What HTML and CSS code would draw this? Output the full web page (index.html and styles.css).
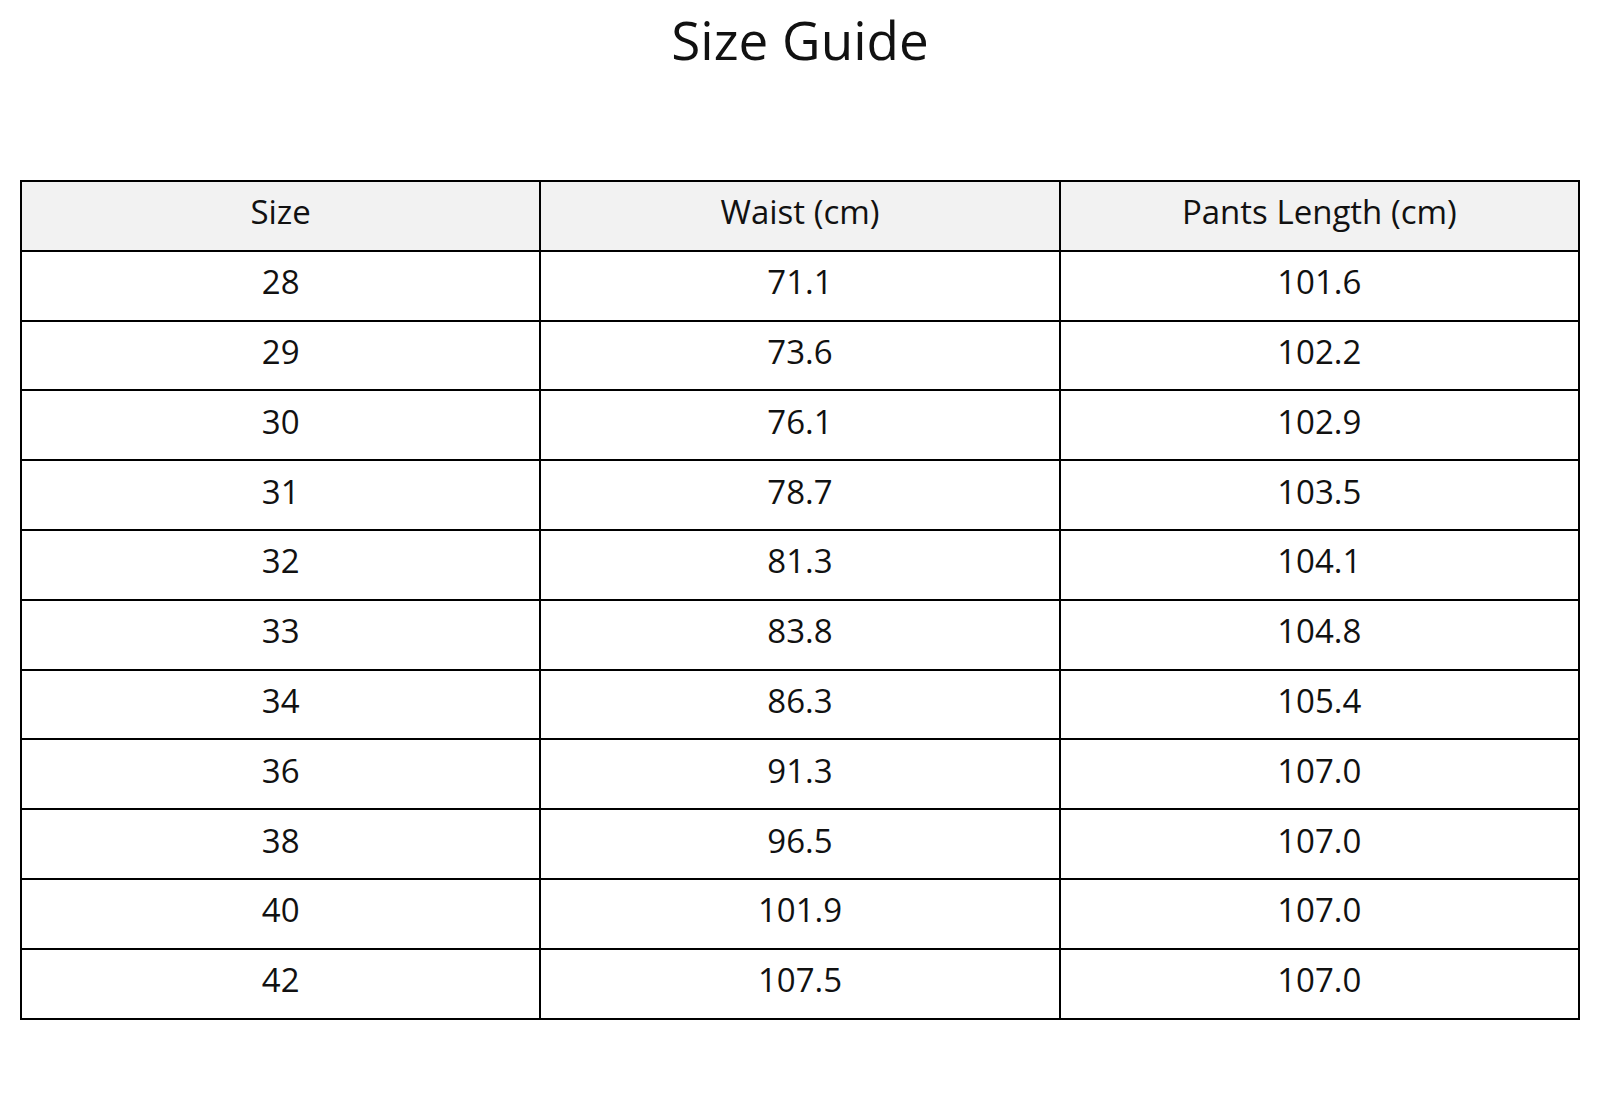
FILE: index.html
```html
<!DOCTYPE html>
<html>
<head>
<meta charset="utf-8">
<link rel="stylesheet" href="styles.css">
</head>
<body>
<h1 class="title">Size Guide</h1>
<table class="guide">
<thead>
<tr><th>Size</th><th>Waist (cm)</th><th>Pants Length (cm)</th></tr>
</thead>
<tbody>
<tr><td>28</td><td>71.1</td><td>101.6</td></tr>
<tr><td>29</td><td>73.6</td><td>102.2</td></tr>
<tr><td>30</td><td>76.1</td><td>102.9</td></tr>
<tr><td>31</td><td>78.7</td><td>103.5</td></tr>
<tr><td>32</td><td>81.3</td><td>104.1</td></tr>
<tr><td>33</td><td>83.8</td><td>104.8</td></tr>
<tr><td>34</td><td>86.3</td><td>105.4</td></tr>
<tr><td>36</td><td>91.3</td><td>107.0</td></tr>
<tr><td>38</td><td>96.5</td><td>107.0</td></tr>
<tr><td>40</td><td>101.9</td><td>107.0</td></tr>
<tr><td>42</td><td>107.5</td><td>107.0</td></tr>
</tbody>
</table>
</body>
</html>
```
FILE: styles.css
```css
html, body {
  margin: 0;
  background: #fff;
}
body {
  padding: 0 20px;
  font-family: "Open Sans", Lato, sans-serif;
  color: #111;
}
.title {
  margin: 0;
  padding-top: 6px;
  height: 180px;
  box-sizing: border-box;
  text-align: center;
  font-size: 53px;
  font-weight: 400;
  line-height: 68px;
}
.guide {
  width: 1560px;
  border-collapse: collapse;
  table-layout: fixed;
  border: 2px solid #000;
}
.guide th, .guide td {
  border: 2px solid #000;
  height: 69.8px;
  padding: 0 0 8px;
  box-sizing: border-box;
  text-align: center;
  vertical-align: middle;
  font-size: 33px;
  font-weight: 400;
}
.guide th {
  background: #f2f2f2;
}
```
